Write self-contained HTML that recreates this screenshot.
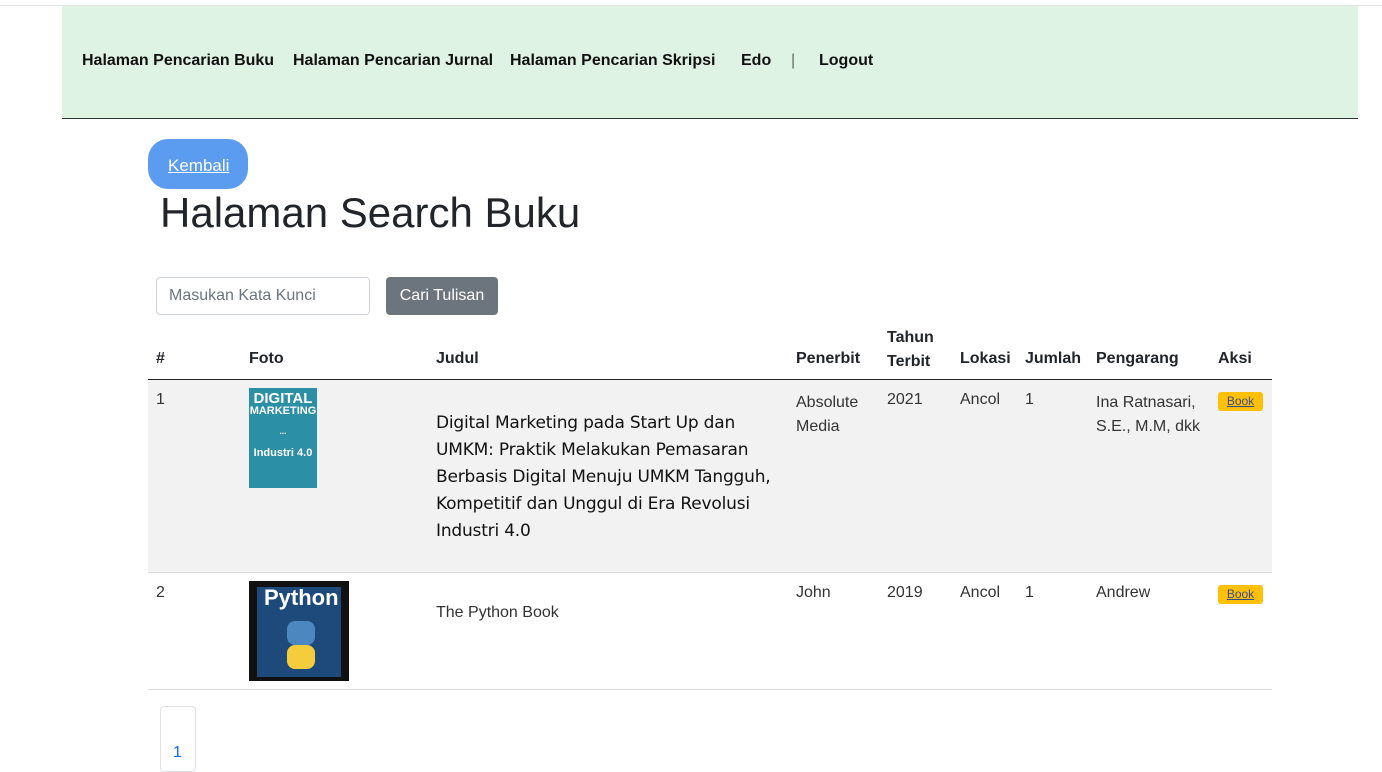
<!DOCTYPE html>
<html><head><meta charset="utf-8"><style>
body{margin:0;width:1382px;height:763px;overflow:hidden;background:#fff;font-family:"Liberation Sans",sans-serif;color:#212529;position:relative}
.a{position:absolute;white-space:nowrap}
.nav{position:absolute;left:62px;top:6px;width:1296px;height:112px;background:#dff3e4;border-bottom:1px solid #333}
.topl{position:absolute;left:0;top:5px;width:1382px;height:1px;background:#e3e3e3}
.nav span{position:absolute;top:46px;font-size:16px;font-weight:600;color:#111}
.th{font-size:16px;font-weight:bold;color:#212529}
.td{font-size:16px;color:#333}
.book{position:absolute;background:#ffc107;border-radius:3px;width:45px;height:19px;font-size:12px;color:#3b4a8a;text-decoration:underline;text-align:center;line-height:19px}
</style></head><body>
<div class="topl"></div>
<div class="nav">
<span style="left:20px">Halaman Pencarian Buku</span>
<span style="left:231px">Halaman Pencarian Jurnal</span>
<span style="left:448px">Halaman Pencarian Skripsi</span>
<span style="left:679px">Edo</span>
<span style="left:729px;font-weight:normal;color:#666">|</span>
<span style="left:757px">Logout</span>
</div>
<div class="a" style="left:148px;top:139px;width:100px;height:50px;background:#5b9cf0;border-radius:20px"></div>
<div class="a" style="left:168px;top:156px;font-size:17px;color:#fff;text-decoration:underline">Kembali</div>
<div class="a" style="left:160px;top:189px;font-size:42px;color:#212529">Halaman Search Buku</div>
<div class="a" style="left:156px;top:277px;width:212px;height:36px;border:1px solid #ced4da;border-radius:4px"></div>
<div class="a" style="left:169px;top:287px;font-size:16px;color:#6c757d">Masukan Kata Kunci</div>
<div class="a" style="left:386px;top:277px;width:112px;height:38px;background:#6c757d;border-radius:4px;color:#fff;font-size:16px;line-height:38px;text-align:center">Cari Tulisan</div>

<div class="a th" style="left:156px;top:350px">#</div>
<div class="a th" style="left:249px;top:350px">Foto</div>
<div class="a th" style="left:436px;top:350px">Judul</div>
<div class="a th" style="left:796px;top:350px">Penerbit</div>
<div class="a th" style="left:887px;top:326px;line-height:24px">Tahun<br>Terbit</div>
<div class="a th" style="left:960px;top:350px">Lokasi</div>
<div class="a th" style="left:1025px;top:350px">Jumlah</div>
<div class="a th" style="left:1096px;top:350px">Pengarang</div>
<div class="a th" style="left:1218px;top:350px">Aksi</div>
<div class="a" style="left:148px;top:379px;width:1124px;height:1px;background:#222"></div>
<div class="a" style="left:148px;top:380px;width:1124px;height:192px;background:#f2f2f2;border-bottom:1px solid #ddd"></div>
<div class="a" style="left:148px;top:689px;width:1124px;height:1px;background:#ddd"></div>

<div class="a td" style="left:156px;top:391px">1</div>
<div class="a" style="left:249px;top:388px;width:68px;height:100px;background:#2b8fa6;color:#fff;font-weight:bold;font-size:11px;text-align:center;line-height:12px;overflow:hidden"><div style="font-size:15px;margin-top:5px">DIGITAL</div>MARKETING<div style="font-size:8px;line-height:30px">...</div><div style="font-size:11px">Industri 4.0</div></div>
<div class="a" style="left:436px;top:410px;font-size:17px;line-height:27px;color:#111;font-family:'DejaVu Sans',sans-serif;letter-spacing:-0.2px">Digital Marketing pada Start Up dan<br>UMKM: Praktik Melakukan Pemasaran<br>Berbasis Digital Menuju UMKM Tangguh,<br>Kompetitif dan Unggul di Era Revolusi<br>Industri 4.0</div>
<div class="a td" style="left:796px;top:391px;line-height:24px">Absolute<br>Media</div>
<div class="a td" style="left:887px;top:391px">2021</div>
<div class="a td" style="left:960px;top:391px">Ancol</div>
<div class="a td" style="left:1025px;top:391px">1</div>
<div class="a td" style="left:1096px;top:391px;line-height:24px">Ina Ratnasari,<br>S.E., M.M, dkk</div>
<div class="book" style="left:1218px;top:392px">Book</div>

<div class="a td" style="left:156px;top:584px">2</div>
<div class="a" style="left:249px;top:581px;width:100px;height:100px;background:#111"><div style="position:absolute;left:8px;top:6px;width:84px;height:90px;background:#1d4a7a"></div><div style="position:absolute;left:15px;top:4px;color:#fff;font-size:22px;font-weight:bold">Python</div><div style="position:absolute;left:38px;top:40px;width:28px;height:24px;background:#4d87c0;border-radius:8px"></div><div style="position:absolute;left:38px;top:64px;width:28px;height:24px;background:#f5cc3c;border-radius:8px"></div></div>
<div class="a td" style="left:436px;top:604px">The Python Book</div>
<div class="a td" style="left:796px;top:584px">John</div>
<div class="a td" style="left:887px;top:584px">2019</div>
<div class="a td" style="left:960px;top:584px">Ancol</div>
<div class="a td" style="left:1025px;top:584px">1</div>
<div class="a td" style="left:1096px;top:584px">Andrew</div>
<div class="book" style="left:1218px;top:585px">Book</div>

<div class="a" style="left:160px;top:706px;width:34px;height:64px;border:1px solid #dee2e6;border-radius:4px"></div>
<div class="a" style="left:173px;top:744px;font-size:16px;color:#0d6efd">1</div>
</body></html>
